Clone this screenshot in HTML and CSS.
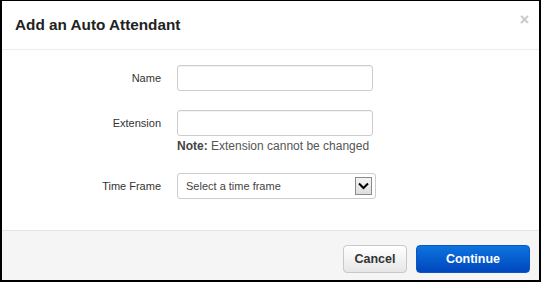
FILE: index.html
```html
<!DOCTYPE html>
<html lang="en">
<head>
<meta charset="UTF-8" />
<title>Add an Auto Attendant</title>
<link rel="stylesheet" href="styles.css">
</head>
<body>
  <div class="modal">
    <div class="modal-header">
      <h3>Add an Auto Attendant</h3>
      <span class="close">&times;</span>
    </div>

    <form class="modal-body">
      <label for="aa-name">Name</label>
      <div class="field">
        <input type="text" id="aa-name">
      </div>

      <label for="aa-ext">Extension</label>
      <div class="field">
        <input type="text" id="aa-ext">
        <p class="note"><b>Note:</b> Extension cannot be changed</p>
      </div>

      <label for="aa-time">Time Frame</label>
      <div class="field">
        <div class="select" id="aa-time">
          <span>Select a time frame</span>
          <span class="select-btn">
            <svg width="11" height="8" viewBox="0 0 11 8"><path d="M1 1.5 L5.5 6 L10 1.5" fill="none" stroke="#000" stroke-width="2"/></svg>
          </span>
        </div>
      </div>
    </form>

    <div class="modal-footer">
      <button type="button" class="btn">Cancel</button>
      <button type="button" class="btn btn-primary">Continue</button>
    </div>
  </div>
</body>
</html>
```

FILE: styles.css
```css
* {
  box-sizing: border-box;
}
body {
  margin: 0;
  font-family: "Liberation Sans", Arial, sans-serif;
  color: #333;
}
.modal {
  width: 541px;
  height: 282px;
  border: 2px solid #000;
  border-top-width: 1px;
  background: #fff;
  display: flex;
  flex-direction: column;
}
.modal-header {
  height: 49px;
  border-bottom: 1px solid #ececec;
  display: flex;
  align-items: center;
  justify-content: space-between;
  padding: 0 10px 0 13px;
}
.modal-header h3 {
  margin: 0;
  font-size: 15.3px;
  font-weight: 700;
  color: #222;
}
.close {
  color: #c8c8c8;
  font-size: 16px;
  font-weight: 700;
  margin-top: -10px;
}
.modal-body {
  flex: 1;
  margin: 0;
  padding-top: 15px;
  display: grid;
  grid-template-columns: 159px 1fr;
  column-gap: 16px;
  row-gap: 19px;
  align-content: start;
}
.modal-body label {
  text-align: right;
  font-size: 11px;
  color: #333;
  line-height: 26px;
}
.field input {
  display: block;
  width: 196px;
  height: 26px;
  border: 1px solid #ccc;
  border-radius: 3px;
  box-shadow: inset 0 1px 1px rgba(0,0,0,0.05);
  font-family: inherit;
  font-size: 11px;
  padding: 0 8px;
}
.note {
  margin: 3px 0 1px;
  font-size: 12px;
  color: #555;
}
.note b {
  color: #444;
}
.select {
  width: 199px;
  height: 26px;
  border: 1px solid #ccc;
  border-radius: 3px;
  display: flex;
  align-items: center;
  justify-content: space-between;
  padding: 0 3px 0 8px;
  font-size: 11px;
  color: #444;
}
.select-btn {
  width: 17px;
  height: 18px;
  border: 1px solid #8a8a8a;
  background: linear-gradient(#f4f4f4, #dedede);
  display: flex;
  align-items: center;
  justify-content: center;
}
.modal-footer {
  height: 50px;
  border-top: 1px solid #e5e5e5;
  background: #f5f5f5;
  display: flex;
  justify-content: flex-end;
  gap: 9px;
  padding: 14px 9px 0 0;
}
.btn {
  height: 28px;
  width: 64px;
  border: 1px solid #c8c8c8;
  border-radius: 4px;
  background: linear-gradient(#ffffff, #e6e6e6);
  font-family: inherit;
  font-size: 12.5px;
  font-weight: 700;
  color: #333;
  padding: 0;
}
.btn-primary {
  width: 114px;
  border-color: #0a56c4;
  background: linear-gradient(#0d74de, #0047bd);
  color: #fff;
}
```
